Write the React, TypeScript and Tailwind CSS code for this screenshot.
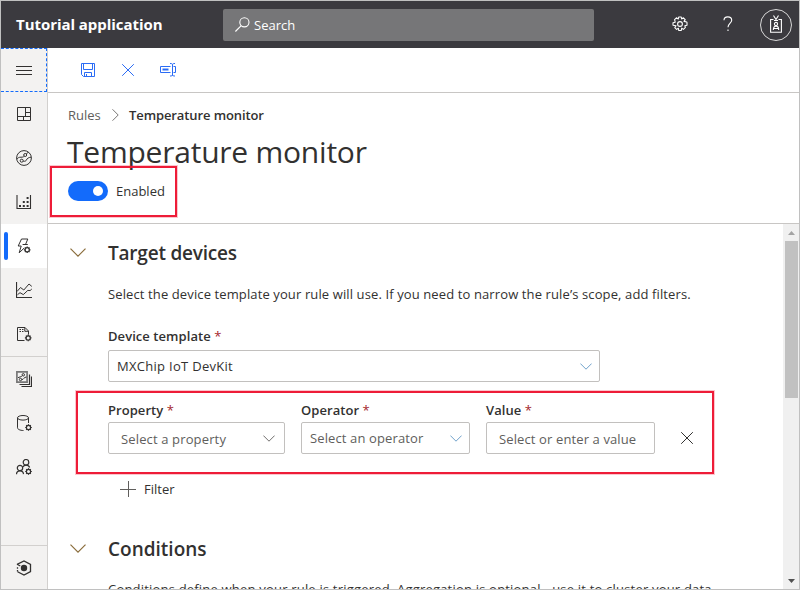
import type { ReactNode } from "react";

type IconProps = { children: ReactNode; className?: string };

function Icon({ children, className = "size-4 text-[#323130]" }: IconProps) {
  return (
    <svg viewBox="0 0 16 16" fill="none" stroke="currentColor" strokeWidth="1" className={"block shrink-0 " + className}>
      {children}
    </svg>
  );
}

const SMALL_GEAR = (
  <>
    <circle cx="12.5" cy="12.5" r="2.1" strokeWidth="1.2" />
    <path d="M12.5 9.2v1.3M12.5 14.5v1.3M9.2 12.5h1.3M14.5 12.5h1.3M10.2 10.2l.9.9M13.9 13.9l.9.9M14.8 10.2l-.9.9M11.1 13.9l-.9.9" strokeWidth="1.2" />
  </>
);

function MenuIcon() {
  return (
    <Icon>
      <path d="M0 4.5h16M0 8.5h16M0 12.5h16" />
    </Icon>
  );
}

function DashboardIcon() {
  return (
    <Icon>
      <path d="M1.5 1.5h13v13h-13zM9.5 1.5v9M9.5 6.5h5M1.5 10.5h13M7.5 10.5v4" />
    </Icon>
  );
}

function DevicesIcon() {
  return (
    <Icon>
      <circle cx="8" cy="8" r="7.4" />
      <circle cx="9.2" cy="5" r="1.5" />
      <circle cx="5.7" cy="10.7" r="1.5" />
      <path d="M.8 9.2C2 7.600 3 7.200 5 7.200c1.600 0 2.400-.2 3.200-1M7.200 11.200c1.800.2 2.600.1 3.200-1.200C11.200 8.300 12.500 7.500 15 7.200M10.400 4l2-2" />
    </Icon>
  );
}

function ExplorerIcon() {
  return (
    <Icon>
      <path d="M1 1v13.500h13.500V1" strokeWidth="1.1" />
      <path d="M3 12h2M6.800 12h2M10.600 12h2M6.800 8h2M10.600 8h2M10.600 4h2" strokeWidth="2" />
    </Icon>
  );
}

function RulesIcon() {
  return (
    <Icon>
      <path d="M9.5 6.5L11.8 1H5.5L2.2 8h3L3.2 14.8l5-4.8M6.6 6.5h5.2" />
      <circle cx="11.2" cy="11.8" r="2.1" strokeWidth="1.2" />
      <path d="M11.2 8.5v1.3M11.2 13.8v1.3M7.9 11.8h1.3M13.2 11.8h1.3M8.9 9.5l.9.9M12.6 13.2l.9.9M13.5 9.5l-.9.9M9.8 13.2l-.9.9" strokeWidth="1.2" />
    </Icon>
  );
}

function AnalyticsIcon() {
  return (
    <Icon>
      <path d="M.5 0v15.500H16" strokeWidth="1.200" />
      <path d="M1 9.500L4.500 5.500l3.300 2.500L13 2l2.800 2.400M1.500 12.700L4 10.700l3.300 1.900 4.500-4.200 2.300.2L15.800 7" />
    </Icon>
  );
}

function JobsIcon() {
  return (
    <Icon>
      <path d="M8.5 14.5h-7v-13h7.5l3.5 3.5v3.5M8.8 1.5v3.8h3.6" />
      <path d="M3.5 3.5h4M3.5 5.5h4" strokeDasharray="1.5 1" />
      <g transform="translate(-.3 -.6)">{SMALL_GEAR}</g>
    </Icon>
  );
}

function TemplatesIcon() {
  return (
    <Icon>
      <path d="M.9.9h10.2v10.2H.9z" stroke="#777" strokeWidth="1.7" />
      <path d="M3.5 13.500h10v-10M5.500 15.500h10v-10" strokeWidth="1.200" />
      <circle cx="7.300" cy="3.800" r="1.200" />
      <circle cx="4.500" cy="8.500" r="1.200" />
      <path d="M2 6.800c1-1 3.200-.6 4.400-2.200M5.700 8.600c2.300 0 1.800-2.400 4.800-2.600" />
    </Icon>
  );
}

function DataIcon() {
  return (
    <Icon>
      <ellipse cx="7" cy="2.8" rx="5.5" ry="2.3" />
      <path d="M1.5 2.8v10c0 1.4 2.5 2.7 6 2.7M12.5 2.8V8" />
      {SMALL_GEAR}
    </Icon>
  );
}

function AdminIcon() {
  return (
    <Icon>
      <circle cx="10" cy="3.3" r="2.8" strokeWidth="1.2" />
      <circle cx="4" cy="9" r="2.700" strokeWidth="1.2" />
      <path d="M.5 15.300c0-2.200 1.400-3.500 3.500-3.500s3.400 1.300 3.500 3.300M6.800 8c.7-1.300 1.700-1.900 3.200-1.900 2 0 3.200 1 3.600 2.400" strokeWidth="1.2" />
      {SMALL_GEAR}
    </Icon>
  );
}

function CentralIcon() {
  return (
    <Icon>
      <path d="M1.500 5V4.200L8 .9l6.500 3.500v7.200L8 15.100l-6.400-3.400M1.500 7.200v1.500M1.500 11.500V10" strokeWidth="1.3" />
      <path d="M1.500 4.500l2.800 1.600" strokeWidth="1.2" />
      <circle cx="8" cy="8" r="3.200" fill="currentColor" stroke="none" />
    </Icon>
  );
}

function Chevron({ className }: { className: string }) {
  return (
    <svg viewBox="0 0 16 9" fill="none" stroke="currentColor" strokeWidth="1.2" className={"block shrink-0 " + className}>
      <path d="M.5.6L8 8.1 15.5.6" />
    </svg>
  );
}

function Cross({ className }: { className: string }) {
  return (
    <svg viewBox="0 0 12 12" fill="none" stroke="currentColor" strokeWidth="1" className={"block shrink-0 " + className}>
      <path d="M.2.2l11.6 11.6M11.8.2L.2 11.8" />
    </svg>
  );
}

function NavItem({ children, active = false }: { children: ReactNode; active?: boolean }) {
  return (
    <div className={"flex h-11 w-full shrink-0 items-center " + (active ? "bg-white" : "")}>
      <div className={"ml-[3px] h-7 w-1 rounded-sm " + (active ? "bg-[#136bfb]" : "")} />
      <div className="ml-2">{children}</div>
    </div>
  );
}

function Label({ children }: { children: ReactNode }) {
  return (
    <div className="h-[18px] text-[13px] leading-[18px] font-semibold whitespace-nowrap">
      <span className="tracking-[0.06px]">{children}</span> <span className="font-normal text-[#a4262c]">*</span>
    </div>
  );
}

function TopBar() {
  return (
    <header className="flex h-[47px] shrink-0 items-center bg-[#3b3a3f] text-white">
      <h1 className="ml-[15px] w-[207px] text-[15px] font-bold whitespace-nowrap tracking-[-0.05px]">Tutorial application</h1>
      <div className="flex h-8 w-[371px] items-center rounded-xs bg-[#767678] pl-3">
        <svg viewBox="0 0 15 15" fill="none" stroke="currentColor" strokeWidth="1.1" className="size-[15px]">
          <circle cx="9.4" cy="5.3" r="4.6" />
          <path d="M6.2 8.6L.4 14.5" />
        </svg>
        <span className="ml-1 text-[13px] leading-5">Search</span>
      </div>
      <svg viewBox="0 0 16 16" fill="none" stroke="currentColor" strokeWidth="1.1" strokeLinejoin="round" className="mb-0.5 ml-[78px] size-4">
        <circle cx="8" cy="8" r="2.4" />
        <path d="M6.700 1h2.600l.3 2 1.800-1.200 1.800 1.800L12 5.400l2.800.6.2.700v2.600l-2.200.5.600 1.600-.2.200-1.800 1.800-1.700-1.200-.4 2.300H6.700l-.3-2.300-1.800 1.200-1.800-1.800L4 9.800 1 9.300V6.700l2.200-.5-.6-2.600 1.800-1.800L6.300 3z" />
      </svg>
      <svg viewBox="0 0 10 16" fill="none" stroke="currentColor" strokeWidth="1.1" className="mb-0.5 ml-[35px] h-4 w-2.5">
        <path d="M1 4.200C1 2 2.700.9 4.800.9S8.700 2.200 8.700 4.200C8.700 7 5 7.300 5 11.300" />
        <path d="M5 13.500v1.500" />
      </svg>
      <div className="ml-[27px] flex size-8 items-center justify-center rounded-full border border-[#d8d8d8]">
        <svg viewBox="0 0 12 18" fill="none" stroke="currentColor" strokeWidth="1.100" className="mb-0.5 h-[18px] w-3">
          <path d="M3.500 4.500H.6v12.800h10.800V4.500H8.500M3.500.5L6 4.500 8.500.5M4 5.500h4" />
          <circle cx="6" cy="9" r="1.600" />
          <path d="M3.300 15c0-2.600 1-3.900 2.700-3.900s2.700 1.300 2.700 3.900M3.500 13.500h5" />
        </svg>
      </div>
    </header>
  );
}

function Sidebar() {
  return (
    <nav className="flex w-[47px] shrink-0 flex-col border-r border-[#d2d0ce] bg-[#f3f2f1]">
      <div className="flex h-11 shrink-0 items-center border border-l-0 border-dashed border-[#136bfb] pl-[15px]">
        <MenuIcon />
      </div>
      <NavItem><DashboardIcon /></NavItem>
      <NavItem><DevicesIcon /></NavItem>
      <NavItem><ExplorerIcon /></NavItem>
      <NavItem active><RulesIcon /></NavItem>
      <NavItem><AnalyticsIcon /></NavItem>
      <NavItem><JobsIcon /></NavItem>
      <div className="h-px shrink-0 bg-[#d2d0ce]" />
      <NavItem><TemplatesIcon /></NavItem>
      <NavItem><DataIcon /></NavItem>
      <NavItem><AdminIcon /></NavItem>
      <div className="mt-auto h-px shrink-0 bg-[#d2d0ce]" />
      <div className="-mb-px">
        <NavItem><CentralIcon /></NavItem>
      </div>
    </nav>
  );
}

function Toolbar() {
  return (
    <div className="flex h-[45px] shrink-0 items-center border-b border-[#c8c6c4] pl-8 text-[#2b6cf5]">
      <Icon className="size-4">
        <path d="M1.500 1.500h13v13H3.500l-2-2zM3.500 1.500v6h9v-6M4.500 14.500v-4h7v4M6.500 12v2.500" />
      </Icon>
      <Cross className="ml-[26px] size-3" />
      <Icon className="ml-[26px] size-4">
        <path d="M10.500 4.500H.5v6h10M13.500 4.500h2v6h-2M12.500 2.500v11M10 1.500c1.500 0 2.500.3 2.500 1 0-.7 1-1 2.500-1M10 14c1.500 0 2.500-.3 2.500-1 0 .7 1 1 2.500 1" />
        <path d="M2.500 7.500h6" strokeWidth="2" />
      </Icon>
    </div>
  );
}

function Heading({ children, className }: { children: ReactNode; className: string }) {
  return (
    <div className="flex h-7 items-center">
      <Chevron className="mr-[22px] mb-0.5 ml-[22px] h-[9px] w-4 text-[#8a6d3b]" />
      <h3 className={"text-[19px] leading-7 font-semibold whitespace-nowrap " + className}>{children}</h3>
    </div>
  );
}

function ScrollBar() {
  return (
    <div className="flex w-4 shrink-0 flex-col bg-[#f0f0f0]">
      <svg viewBox="0 0 7 4" className="mt-[7px] ml-[5px] h-1 w-[7px] fill-[#a3a3a3]"><path d="M3.500 0L7 4H0z" /></svg>
      <div className="mt-[6px] ml-0.5 h-[157px] w-[13px] bg-[#c1c1c1]" />
      <svg viewBox="0 0 7 4" className="mt-auto mb-[6px] ml-[5px] h-1 w-[7px] fill-[#505050]"><path d="M3.500 4L7 0H0z" /></svg>
    </div>
  );
}

export default function App() {
  return (
    <div className="relative flex h-[590px] w-[800px] flex-col overflow-hidden border border-[#c0c0c0] bg-white font-['Open_Sans','Noto_Sans',sans-serif] text-[13px] text-[#323130]">
      <TopBar />
      <div className="flex min-h-0 flex-1">
        <Sidebar />
        <main className="flex min-w-0 flex-1 flex-col">
          <Toolbar />
          <section className="flex h-[131px] shrink-0 flex-col border-b border-[#c8c6c4] pl-5">
            <div className="mt-3 flex h-5 items-center leading-5">
              <span className="w-[44px] text-[#605e5c]">Rules</span>
              <svg viewBox="0 0 7 12" fill="none" stroke="#797775" className="h-3 w-[7px]"><path d="M.5.300L6.200 6 .5 11.700" /></svg>
              <span className="ml-[10px] font-semibold whitespace-nowrap tracking-[-0.1px]">Temperature monitor</span>
            </div>
            <h2 className="mt-[7px] -ml-px h-10 text-[30px] leading-10 whitespace-nowrap tracking-[-0.23px]">Temperature monitor</h2>
            <div className="mt-[9px] flex h-5 items-center">
              <div className="flex h-5 w-10 items-center justify-end rounded-full bg-[#136bfb] pr-[5px]">
                <div className="size-2.5 rounded-full bg-white" />
              </div>
              <span className="ml-2 pt-0.5">Enabled</span>
            </div>
          </section>
          <div className="flex min-h-0 flex-1">
            <section className="min-w-0 flex-1 overflow-hidden pt-[15px]">
              <Heading className="tracking-[-0.21px]">Target devices</Heading>
              <p className="mt-[17px] ml-[60px] h-5 leading-5 whitespace-nowrap tracking-[0.115px]">
                Select the device template your rule will use. If you need to narrow the rule’s scope, add filters.
              </p>
              <div className="mt-[23px] ml-[60px]">
                <Label>Device template</Label>
                <div className="mt-[5px] flex h-8 w-[492px] items-center justify-between rounded-xs border border-[#c2c0be] pr-[7px] pl-2">
                  <span className="pt-0.5 tracking-[0.29px]">MXChip IoT DevKit</span>
                  <Chevron className="h-[7px] w-3 text-[#5f96c4]" />
                </div>
              </div>
              <div className="mt-[19px] ml-[60px] flex">
                <div className="w-[177px]">
                  <Label>Property</Label>
                  <div className="mt-[3px] flex h-8 items-center justify-between rounded-xs border border-[#c2c0be] pr-[9px] pl-3">
                    <span className="pt-[3px] tracking-[0.14px] text-[#605e5c]">Select a property</span>
                    <Chevron className="h-[7px] w-3 text-[#605e5c]" />
                  </div>
                </div>
                <div className="ml-4 w-[169px]">
                  <Label>Operator</Label>
                  <div className="mt-[3px] flex h-8 items-center justify-between rounded-xs border border-[#c2c0be] pr-[7px] pl-2">
                    <span className="pt-0.5 tracking-[0.12px] text-[#605e5c]">Select an operator</span>
                    <Chevron className="h-[7px] w-3 text-[#5f96c4]" />
                  </div>
                </div>
                <div className="ml-4 w-[169px]">
                  <Label>Value</Label>
                  <div className="mt-[3px] flex h-8 items-center rounded-xs border border-[#c2c0be] pl-3">
                    <span className="pt-[3px] tracking-[0.12px] whitespace-nowrap text-[#605e5c]">Select or enter a value</span>
                  </div>
                </div>
                <Cross className="mt-[31px] ml-[26px] size-3" />
              </div>
              <div className="mt-[25px] ml-[72px] flex h-5 items-center">
                <Icon className="size-4 text-[#605e5c]"><path d="M8.500 0v16M0 8.500h16" /></Icon>
                <span className="ml-2 pt-0.5">Filter</span>
              </div>
              <div className="mt-9">
                <Heading className="">Conditions</Heading>
              </div>
              <p className="mt-4 ml-[60px] h-5 leading-5 whitespace-nowrap tracking-[0.195px]">
                Conditions define when your rule is triggered. Aggregation is optional - use it to cluster your data
              </p>
            </section>
            <ScrollBar />
          </div>
        </main>
      </div>
      <div className="pointer-events-none absolute top-[165px] left-[49px] h-[51px] w-[127px] border-2 border-[#ee1c38] ring-1 ring-[#ee1c38]/25" />
      <div className="pointer-events-none absolute top-[390px] left-[75px] h-[83px] w-[638px] border-2 border-[#ee1c38] ring-1 ring-[#ee1c38]/25" />
    </div>
  );
}
